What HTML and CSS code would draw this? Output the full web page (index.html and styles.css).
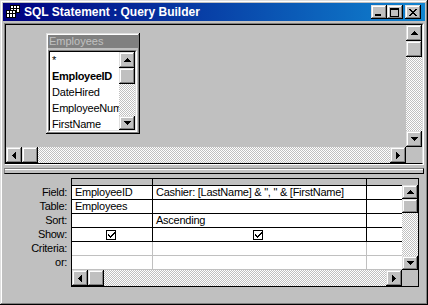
FILE: index.html
```html
<!DOCTYPE html>
<html>
<head>
    <meta charset="UTF-8">
    <title>SQL Statement : Query Builder</title>
    <link rel="stylesheet" href="styles.css">
</head>
<body>
    <div class="window">
        <div class="titlebar">
            <svg class="app-icon" width="16" height="14" viewBox="0 0 16 14">
                <rect x="5.5" y="0.5" width="9" height="7" fill="#fff" stroke="#000"/>
                <path d="M5.5 3.5h9M8.5 .5v7M11.5 .5v7" stroke="#000"/>
                <rect x="1.5" y="5.5" width="9" height="7" fill="#fff" stroke="#000"/>
                <path d="M1.5 8.5h9M4.5 5.5v7M7.5 5.5v7" stroke="#000"/>
            </svg>
            <span class="title">SQL Statement : Query Builder</span>
            <div class="caption-btns">
                <div class="btn3d cap-btn">
                    <svg width="8" height="7" viewBox="0 0 8 7"><rect x="0" y="5" width="6" height="2"/></svg>
                </div>
                <div class="btn3d cap-btn">
                    <svg width="9" height="9" viewBox="0 0 9 9"><path fill-rule="evenodd" d="M0 0h9v9H0zM1 2v6h7V2z"/></svg>
                </div>
                <div class="btn3d cap-btn close">
                    <svg width="8" height="7" viewBox="0 0 8 7">
                        <rect x="0" y="0" width="2" height="1"/><rect x="6" y="0" width="2" height="1"/>
                        <rect x="1" y="1" width="2" height="1"/><rect x="5" y="1" width="2" height="1"/>
                        <rect x="2" y="2" width="4" height="1"/><rect x="3" y="3" width="2" height="1"/>
                        <rect x="2" y="4" width="4" height="1"/>
                        <rect x="1" y="5" width="2" height="1"/><rect x="5" y="5" width="2" height="1"/>
                        <rect x="0" y="6" width="2" height="1"/><rect x="6" y="6" width="2" height="1"/>
                    </svg>
                </div>
            </div>
        </div>

        <div class="top-pane">
            <div class="pane-inner">
                <div class="canvas">
                    <!-- field list window, placed on the design canvas -->
                    <div class="field-list">
                        <div class="fl-title">Employees</div>
                        <div class="fl-box">
                            <div class="fl-inner">
                                <div class="fl-items">
                                    <div class="fl-item">*</div>
                                    <div class="fl-item key">EmployeeID</div>
                                    <div class="fl-item">DateHired</div>
                                    <div class="fl-item">EmployeeNum</div>
                                    <div class="fl-item">FirstName</div>
                                </div>
                                <div class="vscroll small">
                                    <div class="btn3d sb-btn"><svg class="arr" width="7" height="4" viewBox="0 0 7 4"><path d="M3 0h1v1h1v1h1v1h1v1H0V3h1V2h1V1h1z"/></svg></div>
                                    <div class="btn3d sb-btn"></div>
                                    <div class="track"></div>
                                    <div class="btn3d sb-btn short"><svg class="arr" width="7" height="4" viewBox="0 0 7 4"><path d="M0 0h7v1H6v1H5v1H4v1H3V3H2V2H1V1H0z"/></svg></div>
                                </div>
                            </div>
                        </div>
                    </div>
                </div>
                <div class="vscroll">
                    <div class="btn3d sb-btn"><svg class="arr" width="7" height="4" viewBox="0 0 7 4"><path d="M3 0h1v1h1v1h1v1h1v1H0V3h1V2h1V1h1z"/></svg></div>
                    <div class="btn3d sb-btn"></div>
                    <div class="track"></div>
                    <div class="btn3d sb-btn"><svg class="arr" width="7" height="4" viewBox="0 0 7 4"><path d="M0 0h7v1H6v1H5v1H4v1H3V3H2V2H1V1H0z"/></svg></div>
                </div>
                <div class="hscroll">
                    <div class="btn3d sb-btn"><svg class="arr" width="4" height="7" viewBox="0 0 4 7"><path d="M3 0h1v7H3V6H2V5H1V4H0V3h1V2h1V1h1z"/></svg></div>
                    <div class="btn3d sb-btn"></div>
                    <div class="track"></div>
                    <div class="btn3d sb-btn"><svg class="arr" width="4" height="7" viewBox="0 0 4 7"><path d="M0 0h1v1h1v1h1v1h1v1H3v1H2v1H1v1H0z"/></svg></div>
                </div>
                <div class="corner"></div>
            </div>
        </div>

        <div class="splitter"></div>

        <div class="bottom-pane">
            <div class="row-labels">
                <div class="row-label">Field:</div>
                <div class="row-label">Table:</div>
                <div class="row-label">Sort:</div>
                <div class="row-label">Show:</div>
                <div class="row-label">Criteria:</div>
                <div class="row-label">or:</div>
            </div>
            <div class="qbe">
                <div class="qbe-main">
                    <div class="qbe-grid">
                        <div class="cell head"></div><div class="cell head"></div><div class="cell head last"></div>

                        <div class="cell">EmployeeID</div>
                        <div class="cell">Cashier: [LastName] &amp; ", " &amp; [FirstName]</div>
                        <div class="cell last"></div>

                        <div class="cell">Employees</div>
                        <div class="cell"></div>
                        <div class="cell last"></div>

                        <div class="cell"></div>
                        <div class="cell">Ascending</div>
                        <div class="cell last"></div>

                        <div class="cell check"><svg width="10" height="10" viewBox="0 0 10 10"><rect x="0.5" y="0.5" width="9" height="9" fill="#fff" stroke="#000"/><path d="M2 4h1v1h1v1h1V5h1V4h1V3h1V2h1v2H8v1H7v1H6v1H5v1H4V7H3V6H2z"/></svg></div>
                        <div class="cell check"><svg width="10" height="10" viewBox="0 0 10 10"><rect x="0.5" y="0.5" width="9" height="9" fill="#fff" stroke="#000"/><path d="M2 4h1v1h1v1h1V5h1V4h1V3h1V2h1v2H8v1H7v1H6v1H5v1H4V7H3V6H2z"/></svg></div>
                        <div class="cell last"></div>

                        <div class="cell soft"></div>
                        <div class="cell soft"></div>
                        <div class="cell soft last"></div>

                        <div class="cell soft"></div>
                        <div class="cell soft"></div>
                        <div class="cell soft last"></div>
                    </div>
                    <div class="qbe-vbar">
                        <div class="vbar-gap"></div>
                        <div class="vscroll grid-v">
                            <div class="btn3d sb-btn"><svg class="arr" width="7" height="4" viewBox="0 0 7 4"><path d="M3 0h1v1h1v1h1v1h1v1H0V3h1V2h1V1h1z"/></svg></div>
                            <div class="btn3d sb-btn"></div>
                            <div class="track"></div>
                            <div class="btn3d sb-btn"><svg class="arr" width="7" height="4" viewBox="0 0 7 4"><path d="M0 0h7v1H6v1H5v1H4v1H3V3H2V2H1V1H0z"/></svg></div>
                        </div>
                    </div>
                </div>
                <div class="qbe-bottom">
                    <div class="hscroll">
                        <div class="btn3d sb-btn"><svg class="arr" width="4" height="7" viewBox="0 0 4 7"><path d="M3 0h1v7H3V6H2V5H1V4H0V3h1V2h1V1h1z"/></svg></div>
                        <div class="btn3d sb-btn"></div>
                        <div class="track"></div>
                        <div class="btn3d sb-btn"><svg class="arr" width="4" height="7" viewBox="0 0 4 7"><path d="M0 0h1v1h1v1h1v1h1v1H3v1H2v1H1v1H0z"/></svg></div>
                    </div>
                    <div class="corner"></div>
                </div>
            </div>
        </div>
    </div>
</body>
</html>
```

FILE: styles.css
```css
* {
    box-sizing: border-box;
}
body {
    margin: 0;
    font-family: "Liberation Sans", Arial, sans-serif;
    font-size: 11px;
    background: #c0c0c0;
}
.window {
    width: 428px;
    height: 305px;
    padding: 3px;
    background: #c0c0c0;
    box-shadow: inset -1px -1px #000, inset 1px 1px #dfdfdf, inset -2px -2px #808080, inset 2px 2px #fff;
    display: flex;
    flex-direction: column;
}
.btn3d {
    background: #c0c0c0;
    box-shadow: inset -1px -1px #000, inset 1px 1px #dfdfdf, inset -2px -2px #808080, inset 2px 2px #fff;
}

/* title bar */
.titlebar {
    height: 18px;
    display: flex;
    align-items: center;
    padding: 0 4px 0 2px;
    background: linear-gradient(90deg, #000080, #1084d0);
    color: #fff;
}
.app-icon {
    margin-right: 3px;
    flex: none;
}
.title {
    flex: 1;
    font-weight: bold;
    font-size: 12px;
    white-space: nowrap;
}
.caption-btns {
    display: flex;
}
.cap-btn {
    width: 16px;
    height: 14px;
    display: flex;
    align-items: center;
    justify-content: center;
    padding: 1px 1px 0 0;
}
.cap-btn svg {
    fill: #000;
}
.cap-btn.close {
    margin-left: 2px;
}

/* scrollbars */
.vscroll {
    display: flex;
    flex-direction: column;
}
.hscroll {
    display: flex;
}
.sb-btn {
    width: 16px;
    height: 16px;
    flex: none;
    display: flex;
    align-items: center;
    justify-content: center;
}
.arr {
    fill: #000;
}
.track {
    flex: 1;
    background-color: #fff;
    background-image: conic-gradient(#c0c0c0 25%, #fff 0 50%, #c0c0c0 0 75%, #fff 0);
    background-size: 2px 2px;
}
.corner {
    background: #c0c0c0;
}

/* table design area */
.top-pane {
    margin: 2px 1px 0;
    height: 142px;
    border: 1px solid;
    border-color: #808080 #fff #fff #808080;
}
.pane-inner {
    height: 100%;
    border: 1px solid;
    border-color: #000 #dfdfdf #000 #000;
    display: grid;
    grid-template-columns: 1fr 16px;
    grid-template-rows: 1fr 16px;
    background: #c0c0c0;
}
.canvas {
    position: relative;
    overflow: hidden;
}
.field-list {
    position: absolute;
    left: 40px;
    top: 8px;
    width: 94px;
    height: 101px;
    padding: 2px;
    background: #c0c0c0;
    box-shadow: inset -1px -1px #000, inset 1px 1px #dfdfdf, inset -2px -2px #808080, inset 2px 2px #fff;
    display: flex;
    flex-direction: column;
}
.fl-title {
    height: 13px;
    line-height: 13px;
    padding-left: 1px;
    background: #808080;
    color: #c0c0c0;
}
.fl-box {
    flex: 1;
    margin: 2px 1px 0 0;
    border: 1px solid;
    border-color: #808080 #fff #fff #808080;
    min-height: 0;
}
.fl-inner {
    height: 100%;
    border: 1px solid;
    border-color: #000 #dfdfdf #dfdfdf #000;
    background: #fff;
    display: flex;
    overflow: hidden;
}
.fl-items {
    flex: 1;
    overflow: hidden;
    padding-left: 2px;
}
.fl-item {
    height: 16px;
    line-height: 16px;
    white-space: nowrap;
    letter-spacing: -0.2px;
}
.fl-item.key {
    font-weight: bold;
    letter-spacing: -0.3px;
}
.vscroll.small .sb-btn.short {
    height: 14px;
}

.splitter {
    margin: 3px 1px 0;
    height: 6px;
    border: 1px solid;
    border-color: #808080 #000 #000 #808080;
    background: #c0c0c0;
    box-shadow: inset 0 1px #fff;
}

/* design grid */
.bottom-pane {
    display: flex;
    margin-top: 4px;
}
.row-labels {
    width: 68px;
    padding: 8px 4px 0 0;
    text-align: right;
}
.row-label {
    height: 14px;
    line-height: 13px;
    letter-spacing: -0.3px;
}
.qbe {
    width: 348px;
    height: 109px;
    border: 1px solid #000;
    display: flex;
    flex-direction: column;
}
.qbe-main {
    display: flex;
    height: 91px;
}
.qbe-grid {
    width: 330px;
    display: grid;
    grid-template-columns: 81px 214px 35px;
    grid-template-rows: 7px repeat(6, 14px);
    background: #fff;
}
.cell {
    border-right: 1px solid #000;
    border-bottom: 1px solid #000;
    padding-left: 3px;
    line-height: 13px;
    white-space: nowrap;
    overflow: hidden;
    letter-spacing: -0.25px;
}
.cell.head {
    background: #c0c0c0;
}
.cell.last {
    border-right: none;
}
.cell.soft {
    border-color: #c0c0c0;
}
.cell.check {
    display: flex;
    align-items: center;
    justify-content: center;
    padding: 0 3px 0 0;
}
.qbe-vbar {
    width: 16px;
    display: flex;
    flex-direction: column;
    background: #c0c0c0;
}
.vbar-gap {
    height: 6px;
}
.grid-v {
    flex: 1;
}
.grid-v .sb-btn {
    height: 14px;
}
.qbe-bottom {
    display: flex;
    height: 16px;
}
.qbe-bottom .hscroll {
    width: 330px;
}
.qbe-bottom .corner {
    flex: 1;
}
```
